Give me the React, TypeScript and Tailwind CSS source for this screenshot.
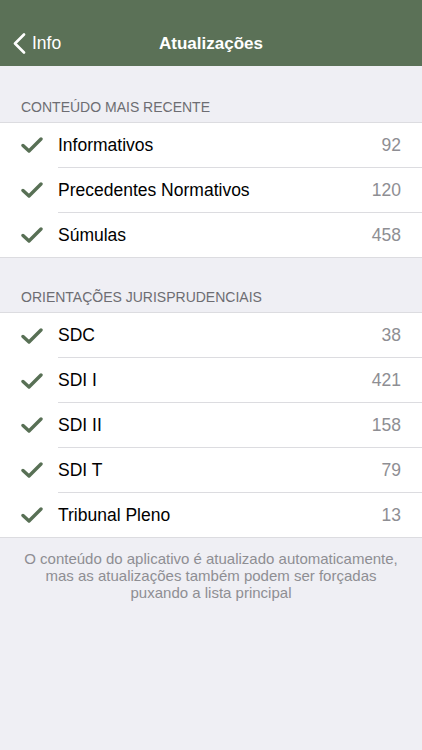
const recentes = [
  { label: 'Informativos', count: 92 },
  { label: 'Precedentes Normativos', count: 120 },
  { label: 'Súmulas', count: 458 },
];

const orientacoes = [
  { label: 'SDC', count: 38 },
  { label: 'SDI I', count: 421 },
  { label: 'SDI II', count: 158 },
  { label: 'SDI T', count: 79 },
  { label: 'Tribunal Pleno', count: 13 },
];

function Check() {
  return (
    <svg width="22" height="18" viewBox="0 0 22 18" aria-hidden="true">
      <path
        d="M2 9.5 L8 15 L20 3"
        fill="none"
        stroke="#587055"
        strokeWidth="3.4"
        strokeLinecap="round"
        strokeLinejoin="round"
      />
    </svg>
  );
}

function Section({ title, items }: { title: string; items: { label: string; count: number }[] }) {
  return (
    <section>
      <h2 className="px-[21px] pb-[6px] text-[14px] leading-[17px] uppercase text-[#6d6d72]">{title}</h2>
      <ul className="border-y border-[#dcdce0] bg-white">
        {items.map((item, i) => (
          <li key={item.label} className="flex h-[44.8px] items-center pl-[21px]">
            <span className="flex w-[37px] shrink-0">
              <Check />
            </span>
            <div
              className={
                'flex h-full flex-1 items-center pr-[21px] ' +
                (i < items.length - 1 ? 'border-b border-[#dcdce0]' : '')
              }
            >
              <span className="flex-1 text-[17.5px] text-black">{item.label}</span>
              <span className="text-[17.5px] text-[#8e8e93]">{item.count}</span>
            </div>
          </li>
        ))}
      </ul>
    </section>
  );
}

export default function App() {
  return (
    <div className="min-h-[750px] bg-[#efeff4] font-['Liberation_Sans',Arial,sans-serif]">
      <header className="flex h-[66px] items-end bg-[#5b7157] pb-[10px] text-white">
        <div className="relative flex w-full items-center justify-center">
          <button type="button" className="absolute left-[13px] flex items-center gap-[6px] text-[17.5px]">
            <svg width="13" height="21" viewBox="0 0 13 21" aria-hidden="true">
              <path d="M11 1.5 L2 10.5 L11 19.5" fill="none" stroke="white" strokeWidth="2.6" strokeLinecap="round" strokeLinejoin="round" />
            </svg>
            Info
          </button>
          <h1 className="text-[17px] font-bold">Atualizações</h1>
        </div>
      </header>
      <main className="pt-[33px]">
        <Section title="Conteúdo mais recente" items={recentes} />
        <div className="h-[31px]" />
        <Section title="Orientações jurisprudenciais" items={orientacoes} />
        <p className="px-[24px] pt-[12px] text-center text-[15px] leading-[17px] text-[#8e8e93]">
          O conteúdo do aplicativo é atualizado automaticamente, mas as atualizações também podem ser forçadas puxando a lista principal
        </p>
      </main>
    </div>
  );
}
